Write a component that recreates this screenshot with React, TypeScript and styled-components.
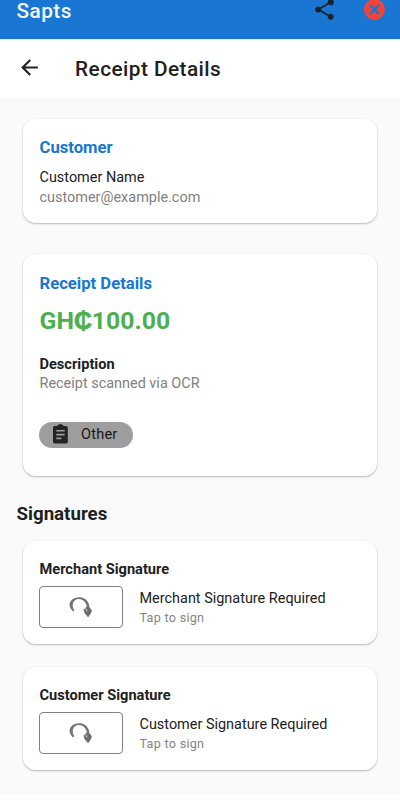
import React from "react";
import styled, { createGlobalStyle } from "styled-components";

const GlobalStyle = createGlobalStyle`
  * { box-sizing: border-box; }
  body { margin: 0; background: #fff; font-family: Roboto, "Liberation Sans", sans-serif; overflow: hidden; }
`;

const Page = styled.div`
  width: 400px;
  height: 800px;
  overflow: hidden;
  background: #fff;
  display: flex;
  flex-direction: column;
`;

const BrandBar = styled.header`
  flex: none;
  height: 39px;
  background: #1976d2;
  display: flex;
  align-items: flex-start;
  padding: 0 13px 0 16.5px;
`;

const Brand = styled.div`
  flex: 1;
  margin-top: -2px;
  color: #f1f7fd;
  font-size: 20.8px;
  line-height: 26px;
  font-weight: 500;
  letter-spacing: 0.45px;
`;

const IconButton = styled.button`
  border: 0;
  padding: 0;
  background: none;
  display: flex;
  flex: none;
  margin: -3.500px 0 0 25.5px;
`;

const TitleBar = styled.div`
  flex: none;
  height: 58px;
  background: #fff;
  box-shadow: inset 0 2px 1px -1px #dfe9f6;
  display: flex;
  align-items: center;
  padding: 2px 16.5px 0;
`;

const BackButton = styled.button`
  border: 0;
  padding: 0;
  background: none;
  display: flex;
  width: 25px;
  margin: -3px 33.5px 0 0;
`;

const Title = styled.h1`
  margin: 0;
  color: #212121;
  font-size: 20.8px;
  line-height: 28px;
  font-weight: 500;
  letter-spacing: 0.45px;
`;

const Content = styled.main`
  flex: none;
  height: 698px;
  background: #fafafa;
  padding: 22px 23px 0;
`;

const Card = styled.section<{ $height: number; $gap: number; $top?: number }>`
  height: ${(p) => p.$height}px;
  margin-bottom: ${(p) => p.$gap}px;
  padding: ${(p) => p.$top ?? 16}px 16.5px 0;
  border-radius: 12.5px;
  background: #fff;
  box-shadow: 0 1px 2px rgba(0, 0, 0, 0.26), 0 0 2px rgba(0, 0, 0, 0.05);
`;

const CardTitle = styled.h2`
  margin: 0 0 8px;
  color: #1976d2;
  font-size: 16.65px;
  line-height: 25px;
  font-weight: 700;
`;

const Amount = styled.div`
  margin: 0 0 17px;
  color: #4caf50;
  font-size: 24.8px;
  line-height: 33px;
  font-weight: 700;
`;

const CurrencyMark = styled.span`
  -webkit-text-stroke: 0.7px #4caf50;
`;

const Body = styled.div<{ $muted?: boolean; $bold?: boolean }>`
  color: ${(p) => (p.$muted ? "#808080" : "#212121")};
  font-size: ${(p) => (p.$bold ? 14.6 : 14.45)}px;
  line-height: 20px;
  font-weight: ${(p) => (p.$bold ? 700 : 400)};
  white-space: nowrap;
`;

const Chip = styled.div`
  width: 93.5px;
  height: 26px;
  margin-top: 27.5px;
  margin-left: -0.5px;
  padding-left: 10.5px;
  border-radius: 13px;
  background: #9e9e9e;
  display: flex;
  align-items: center;
  gap: 10.5px;
  color: #171717;
  font-size: 14.55px;
  letter-spacing: 0.2px;
`;

const SectionTitle = styled.h2`
  margin: -6px 0 14.5px -6.5px;
  color: #212121;
  font-size: 18.7px;
  line-height: 26px;
  font-weight: 700;
`;

const SignatureList = styled.div`
  margin-top: -15.3px;
  padding-top: 15px;
`;

const SignatureRow = styled.div`
  display: flex;
  align-items: center;
  gap: 16.5px;
  margin-top: 7.5px;
`;

const SignatureBox = styled.div`
  width: 84px;
  height: 42px;
  margin-left: -0.5px;
  border: 1px solid #808080;
  border-radius: 4px;
  display: flex;
  align-items: center;
  justify-content: center;
`;

const SignatureText = styled.div`
  padding-top: 2px;
`;

const Hint = styled.div`
  color: #858585;
  font-size: 12.6px;
  line-height: 18px;
  letter-spacing: 0.28px;
`;

const ShareIcon = () => (
  <svg width="25" height="25" viewBox="0 0 24 24" fill="#17242f">
    <path d="M18 16.08c-.76 0-1.44.3-1.96.77L8.91 12.7c.05-.23.09-.46.09-.7s-.04-.47-.09-.7l7.05-4.11c.54.5 1.25.81 2.04.81 1.66 0 3-1.34 3-3s-1.34-3-3-3-3 1.34-3 3c0 .24.04.47.09.7L8.04 9.81C7.5 9.31 6.79 9 6 9c-1.66 0-3 1.34-3 3s1.34 3 3 3c.79 0 1.5-.31 2.04-.81l7.12 4.16c-.05.21-.08.43-.08.65 0 1.61 1.31 2.92 2.92 2.92s2.92-1.31 2.92-2.92-1.31-2.92-2.92-2.92z" />
  </svg>
);

const CloseIcon = () => (
  <svg width="25" height="25" viewBox="0 0 24 24" fill="#f44336">
    <path d="M12 2C6.47 2 2 6.47 2 12s4.47 10 10 10 10-4.47 10-10S17.53 2 12 2zm5 13.59L15.59 17 12 13.41 8.41 17 7 15.59 10.59 12 7 8.41 8.41 7 12 10.59 15.59 7 17 8.41 13.41 12 17 15.59z" />
  </svg>
);

const BackIcon = () => (
  <svg width="25" height="25" viewBox="0 0 24 24" fill="#212121">
    <path d="M20 11H7.83l5.59-5.59L12 4l-8 8 8 8 1.41-1.41L7.83 13H20v-2z" />
  </svg>
);

const ClipboardIcon = () => (
  <svg width="21" height="22" viewBox="0 0 21 22" fill="#242424">
    <path d="M4.5 2H7C7.6.8 8.800.3 10.300.3s2.700.5 3.300 1.700h2.500q1.700 0 1.700 1.700v14.200q0 1.700-1.700 1.700H4.700Q3 19.600 3 17.900V3.700Q3 2 4.500 2ZM6.300 6v1.600h8.400V6ZM6.300 9.800v1.600h8.400V9.800ZM6.300 13.600v1.700h5v-1.700Z" fillRule="evenodd" />
  </svg>
);

const SignatureIcon = () => (
  <svg width="24" height="24" viewBox="0 0 24 24">
    <path d="M4.300 16.500C-.2 13-.7 7.500 3.200 4.400 8.500.6 18.400.8 20.500 11.200L18 12C17 6 12.500 3.200 7.800 4.300 3.500 5.600 2.500 11 5.300 15.300Z" fill="#747474" />
    <path d="M14.500 14.300l4.700-3.800 3.600 4.700-.7 2.900-3 4.200-3.600-4.200Z" fill="#6c6c6c" />
    <path d="M13.800 14.900l3-2.100M18 14.400l-.6 1.900" stroke="#d1d1d1" strokeWidth="1.200" />
  </svg>
);

const signatures = [
  { party: "Merchant", gap: 23 },
  { party: "Customer", gap: 0 },
];

export default function App() {
  return (
    <Page>
      <GlobalStyle />
      <BrandBar>
        <Brand>Sapts</Brand>
        <IconButton aria-label="Share"><ShareIcon /></IconButton>
        <IconButton aria-label="Close"><CloseIcon /></IconButton>
      </BrandBar>
      <TitleBar>
        <BackButton aria-label="Back"><BackIcon /></BackButton>
        <Title>Receipt Details</Title>
      </TitleBar>
      <Content>
        <Card $height={104} $gap={31}>
          <CardTitle>Customer</CardTitle>
          <Body>Customer Name</Body>
          <Body $muted>customer@example.com</Body>
        </Card>
        <Card $height={222} $gap={31} $top={17}>
          <CardTitle>Receipt Details</CardTitle>
          <Amount>GH<CurrencyMark>₵</CurrencyMark>100.00</Amount>
          <Body $bold>Description</Body>
          <Body $muted>Receipt scanned via OCR</Body>
          <Chip><ClipboardIcon />Other</Chip>
        </Card>
        <SectionTitle>Signatures</SectionTitle>
        <SignatureList>
          {signatures.map(({ party, gap }) => (
            <Card key={party} $height={103} $gap={gap} $top={17.5}>
              <Body $bold>{party} Signature</Body>
              <SignatureRow>
                <SignatureBox><SignatureIcon /></SignatureBox>
                <SignatureText>
                  <Body>{party} Signature Required</Body>
                  <Hint>Tap to sign</Hint>
                </SignatureText>
              </SignatureRow>
            </Card>
          ))}
        </SignatureList>
      </Content>
    </Page>
  );
}
